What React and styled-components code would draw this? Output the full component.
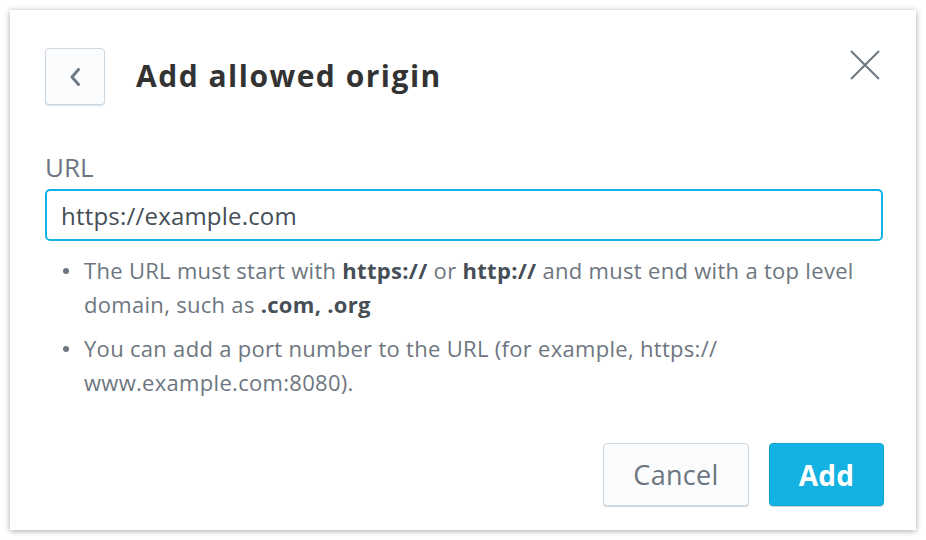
import React from 'react';
import styled, { createGlobalStyle } from 'styled-components';

const GlobalStyle = createGlobalStyle`
    body {
        margin: 0;
        background: #ffffff;
        font-family: "Open Sans", "Noto Sans", sans-serif;
    }
`

const Page = styled.div`
    padding: 10px;
    width: 926px;
    height: 540px;
    box-sizing: border-box;
`

const Dialog = styled.div`
    width: 906px;
    height: 520px;
    box-sizing: border-box;
    background: #fff;
    box-shadow: 0 1px 6px rgba(0, 0, 0, 0.35);
    padding: 38px 33px 0 35px;
    display: flex;
    flex-direction: column;
`

const Header = styled.div`
    display: flex;
    align-items: center;
    height: 57px;
    position: relative;
`

const BackButton = styled.button`
    width: 60px;
    height: 57px;
    box-sizing: border-box;
    border: 1px solid #ccd8e2;
    border-radius: 4px;
    background: #fbfcfd;
    box-shadow: 0 1px 1px rgba(20, 56, 93, 0.15);
    display: flex;
    align-items: center;
    justify-content: center;
    padding: 0;
`

const Title = styled.h1`
    margin: -2px 0 0 31px;
    font-family: "Open Sans", sans-serif;
    font-size: 30px;
    font-weight: 700;
    letter-spacing: 1.5px;
    color: #333333;
`

const CloseButton = styled.button`
    position: absolute;
    right: 3px;
    top: 2px;
    width: 30px;
    height: 30px;
    border: none;
    background: none;
    padding: 0;
`

const Label = styled.div`
    margin-top: 46px;
    font-size: 26px;
    color: #6d7680;
    line-height: 32px;
`

const Input = styled.input`
    margin-top: 6px;
    height: 52px;
    box-sizing: border-box;
    border: 2px solid #14b2e2;
    border-radius: 5px;
    padding: 0 14px;
    font-family: "Open Sans", sans-serif;
    font-size: 24px;
    letter-spacing: 0.2px;
    color: #464e56;
    outline: none;
`

const Hints = styled.ul`
    margin: 12px 0 0 0;
    padding: 0 0 0 39px;
    list-style: none;
    font-size: 22px;
    letter-spacing: 0.3px;
    line-height: 34px;
    color: #6d7680;
`

const Hint = styled.li`
    position: relative;
    margin-bottom: 10px;
    &::before {
        content: '';
        position: absolute;
        left: -21px;
        top: 15px;
        width: 6px;
        height: 6px;
        border-radius: 50%;
        background: #6d7680;
    }
    b {
        color: #464e56;
        font-weight: 700;
    }
`

const Footer = styled.div`
    display: flex;
    justify-content: flex-end;
    gap: 20px;
    margin-top: auto;
    margin-bottom: 24px;
    margin-right: -1px;
`

const Button = styled.button`
    height: 63px;
    width: ${p => p.$primary ? '115px' : '146px'};
    box-sizing: border-box;
    padding: 0;
    border-radius: 4px;
    border: 1px solid ${p => p.$primary ? '#0fa3cf' : '#ccd8e2'};
    background: ${p => p.$primary ? '#14b2e2' : '#fbfcfd'};
    color: ${p => p.$primary ? '#fff' : '#6d7680'};
    font-family: "Open Sans", sans-serif;
    font-size: ${p => p.$primary ? '28px' : '27px'};
    letter-spacing: 0.3px;
    font-weight: ${p => p.$primary ? 700 : 400};
    box-shadow: 0 1px 1px rgba(20, 56, 93, 0.2);
`

const App = () => {
    return (
        <Page>
            <GlobalStyle />
            <Dialog>
                <Header>
                    <BackButton>
                        <svg width="16" height="22" viewBox="0 0 16 22">
                            <path d="M11.5 3.5 L5 11 L11.5 18.5" fill="none" stroke="#6d7a86" strokeWidth="3" strokeLinecap="round" strokeLinejoin="round" />
                        </svg>
                    </BackButton>
                    <Title>Add allowed origin</Title>
                    <CloseButton>
                        <svg width="30" height="30" viewBox="0 0 30 30">
                            <path d="M1 1 L29 29 M29 1 L1 29" stroke="#6d7680" strokeWidth="2" />
                        </svg>
                    </CloseButton>
                </Header>
                <Label>URL</Label>
                <Input defaultValue="https://example.com" />
                <Hints>
                    <Hint>
                        The URL must start with <b>https://</b> or <b>http://</b> and must end with a top level domain, such as <b>.com, .org</b>
                    </Hint>
                    <Hint>
                        You can add a port number to the URL (for example, https:// www.example.com:8080).
                    </Hint>
                </Hints>
                <Footer>
                    <Button>Cancel</Button>
                    <Button $primary>Add</Button>
                </Footer>
            </Dialog>
        </Page>
    )
}

export default App;
